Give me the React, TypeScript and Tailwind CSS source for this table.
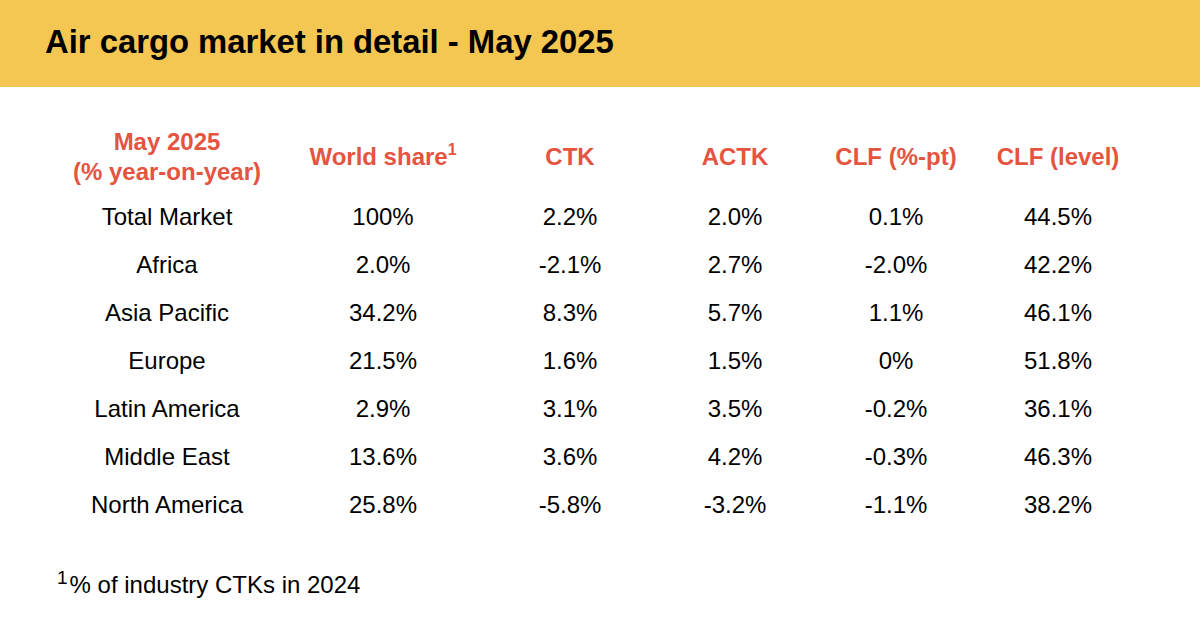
const rows: string[][] = [
  ['Total Market', '100%', '2.2%', '2.0%', '0.1%', '44.5%'],
  ['Africa', '2.0%', '-2.1%', '2.7%', '-2.0%', '42.2%'],
  ['Asia Pacific', '34.2%', '8.3%', '5.7%', '1.1%', '46.1%'],
  ['Europe', '21.5%', '1.6%', '1.5%', '0%', '51.8%'],
  ['Latin America', '2.9%', '3.1%', '3.5%', '-0.2%', '36.1%'],
  ['Middle East', '13.6%', '3.6%', '4.2%', '-0.3%', '46.3%'],
  ['North America', '25.8%', '-5.8%', '-3.2%', '-1.1%', '38.2%'],
];

const grid = 'grid grid-cols-[214px_218px_156px_174px_148px_176px] text-center';

export default function App() {
  return (
    <div className="w-[1200px] h-[618px] bg-white overflow-hidden font-['Liberation_Sans',Arial,sans-serif]">
      {/* Title band */}
      <div className="h-[87px] bg-[#f3c752] flex items-center px-[45px]">
        <h1 className="text-[32.8px] font-bold text-black leading-none pb-[2px]">
          Air cargo market in detail - May 2025
        </h1>
      </div>

      <div className="pl-[60px] pt-[34px]">
        {/* Column headings */}
        <div className={`${grid} h-[72px] items-center text-[24px] leading-[30px] font-bold text-[#e4543f]`}>
          <div>
            May 2025
            <br />
            (% year-on-year)
          </div>
          <div>
            World share<sup className="text-[16px] -top-[10px]">1</sup>
          </div>
          <div>CTK</div>
          <div>ACTK</div>
          <div>CLF (%-pt)</div>
          <div>CLF (level)</div>
        </div>

        {/* Data */}
        {rows.map((r) => (
          <div key={r[0]} className={`${grid} h-[48px] items-center text-[24px] text-black`}>
            {r.map((cell, i) => (
              <div key={i}>{cell}</div>
            ))}
          </div>
        ))}
      </div>

      {/* Footnote */}
      <div className="pl-[57px] mt-[41px] text-[24px] leading-[30px] text-black">
        <sup className="text-[19px] -top-[9px] mr-[2px]">1</sup>% of industry CTKs in 2024
      </div>
    </div>
  );
}
